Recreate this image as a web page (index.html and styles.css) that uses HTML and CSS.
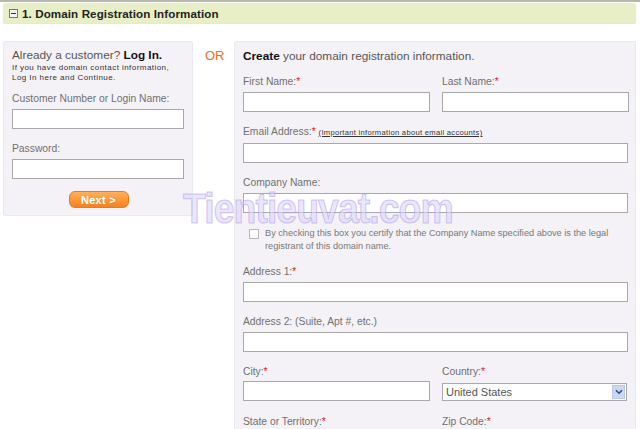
FILE: index.html
```html
<!DOCTYPE html>
<html>
<head>
<meta charset="utf-8">
<link rel="stylesheet" href="styles.css">
</head>
<body>
<div class="topline"></div>
<div class="header">
  <span class="toggle"><span class="minus"></span></span>
  <span class="htitle">1. Domain Registration Information</span>
</div>
<div class="main">
  <div class="panel login">
    <div class="ptitle">Already a customer? <b>Log In.</b></div>
    <div class="note">If you have domain contact information,<br>Log In here and Continue.</div>
    <div class="field first">
      <label class="lbl">Customer Number or Login Name:</label>
      <input class="txt" type="text">
    </div>
    <div class="field">
      <label class="lbl">Password:</label>
      <input class="txt" type="password">
    </div>
    <div class="btnrow"><button class="next">Next &gt;</button></div>
  </div>
  <div class="or">OR</div>
  <div class="panel create">
    <div class="ptitle"><b>Create</b> your domain registration information.</div>
    <div class="row two">
      <div class="field">
        <label class="lbl">First Name:<span class="req">*</span></label>
        <input class="txt" type="text">
      </div>
      <div class="field">
        <label class="lbl">Last Name:<span class="req">*</span></label>
        <input class="txt" type="text">
      </div>
    </div>
    <div class="field">
      <label class="lbl">Email Address:<span class="req">*</span> <a class="info">(Important information about email accounts)</a></label>
      <input class="txt" type="text">
    </div>
    <div class="field">
      <label class="lbl">Company Name:</label>
      <input class="txt" type="text">
    </div>
    <div class="check">
      <span class="box"></span>
      <span class="ctext">By checking this box you certify that the Company Name specified above is the legal registrant of this domain name.</span>
    </div>
    <div class="field">
      <label class="lbl">Address 1:<span class="req">*</span></label>
      <input class="txt" type="text">
    </div>
    <div class="field">
      <label class="lbl">Address 2: (Suite, Apt #, etc.)</label>
      <input class="txt" type="text">
    </div>
    <div class="row two">
      <div class="field city">
        <label class="lbl">City:<span class="req">*</span></label>
        <input class="txt" type="text">
      </div>
      <div class="field city">
        <label class="lbl">Country:<span class="req">*</span></label>
        <div class="select"><span class="sval">United States</span><span class="sbtn"><svg width="8" height="6" viewBox="0 0 8 6"><path d="M1 1.2 L4 4.2 L7 1.2" fill="none" stroke="#2a4a8a" stroke-width="1.6"/></svg></span></div>
      </div>
    </div>
    <div class="row two">
      <div class="field">
        <label class="lbl">State or Territory:<span class="req">*</span></label>
      </div>
      <div class="field">
        <label class="lbl">Zip Code:<span class="req">*</span></label>
      </div>
    </div>
  </div>
</div>
<div class="watermark">Tientieuvat.com</div>
</body>
</html>
```
FILE: styles.css
```css
html, body { margin: 0; padding: 0; }
body {
  width: 640px; height: 429px; overflow: hidden; background: #fff;
  font-family: "Liberation Sans", Arial, sans-serif; color: #666;
  position: relative;
}
.topline { height: 2px; background: #b8b8a8; }
.header {
  margin: 1px 4px 0 3px; height: 20px; background: #e8efc6;
  border-radius: 2px; box-shadow: 0 1px 1px #e4e4dc;
  display: flex; align-items: center; padding-left: 6px;
}
.toggle {
  width: 7px; height: 7px; border: 1px solid #777; background: #f4f4f4;
  display: flex; align-items: center; justify-content: center; margin-right: 4px;
}
.minus { width: 5px; height: 1px; background: #333; }
.htitle { font-weight: bold; font-size: 11.6px; color: #222; letter-spacing: 0.1px; }
.main { display: flex; align-items: flex-start; margin-top: 18px; }
.panel {
  background: #f5f2f7; border: 1px solid #ece8ef; border-radius: 2px;
  box-sizing: border-box;
}
.login { width: 190px; margin-left: 3px; padding: 6px 8px 7px 8px; }
.create { width: 402px; padding: 7px 7px 30px 8px; }
.or { width: 41px; color: #f86a1c; font-size: 13px; text-align: left; padding: 7px 0 0 12px; box-sizing: border-box; }
.ptitle { font-size: 11.8px; color: #555; line-height: 15px; }
.ptitle b { color: #111; }
.note { font-size: 8px; line-height: 10px; color: #333; letter-spacing: 0.45px; margin-top: 0; }
.field { display: flex; flex-direction: column; }
.lbl { font-size: 10.3px; line-height: 12px; color: #707070; margin-bottom: 4px; }
.req { color: #e0201a; }
.txt {
  box-sizing: border-box; height: 20px; width: 100%; margin: 0;
  border: 1px solid #a9a9a9; background: #fff; padding: 0;
}
.login .first { margin-top: 10px; }
.login .field + .field { margin-top: 14px; }
.btnrow { display: flex; justify-content: center; margin-top: 12px; padding-left: 1px; }
.next {
  width: 60px; height: 17px; border-radius: 6px; border: 1px solid #ea7a1e;
  background: linear-gradient(#ffb15a, #f6801f); color: #fff; font-weight: bold;
  font-family: "Liberation Sans", Arial, sans-serif; font-size: 11px; padding: 0;
  letter-spacing: 0.3px;
}
.create .ptitle { margin-bottom: 12px; }
.create .field { margin-bottom: 14px; }
.row.two { display: grid; grid-template-columns: 187px 187px; column-gap: 12px; }
.info { font-size: 7.6px; color: #333; text-decoration: underline; letter-spacing: 0.3px; }
.check { display: flex; align-items: flex-start; margin: 3px 0 13px 6px; }
.box {
  width: 8px; height: 8px; border: 1px solid #b8b8b8; background: #fff; flex: none;
  margin-top: 2px; margin-right: 6px;
}
.ctext { font-size: 9.2px; line-height: 13px; color: #777; width: 360px; }
.create .city { margin-bottom: 15px; }
.create .city .lbl { margin-bottom: 3px; }
.select {
  box-sizing: border-box; height: 18px; width: 185px; border: 1px solid #a9a9a9;
  background: #fff; display: flex; align-items: center; justify-content: space-between;
  margin-top: 2px;
}
.sval { font-size: 11px; color: #555; padding-left: 3px; }
.sbtn {
  width: 13px; height: 14px; margin-right: 1px; background: #c9d8f4; border: 1px solid #b8c9ec;
  box-sizing: border-box; display: flex; align-items: center; justify-content: center;
}
.watermark {
  position: absolute; left: 183px; top: 184px; font-size: 43px; font-weight: bold;
  font-family: "Liberation Sans", Arial, sans-serif; color: rgba(222, 214, 250, 0.6);
  -webkit-text-stroke: 1.2px rgba(160, 140, 230, 0.45); letter-spacing: -1.1px;
  transform: scaleX(0.87); transform-origin: left top; pointer-events: none;
}
```
